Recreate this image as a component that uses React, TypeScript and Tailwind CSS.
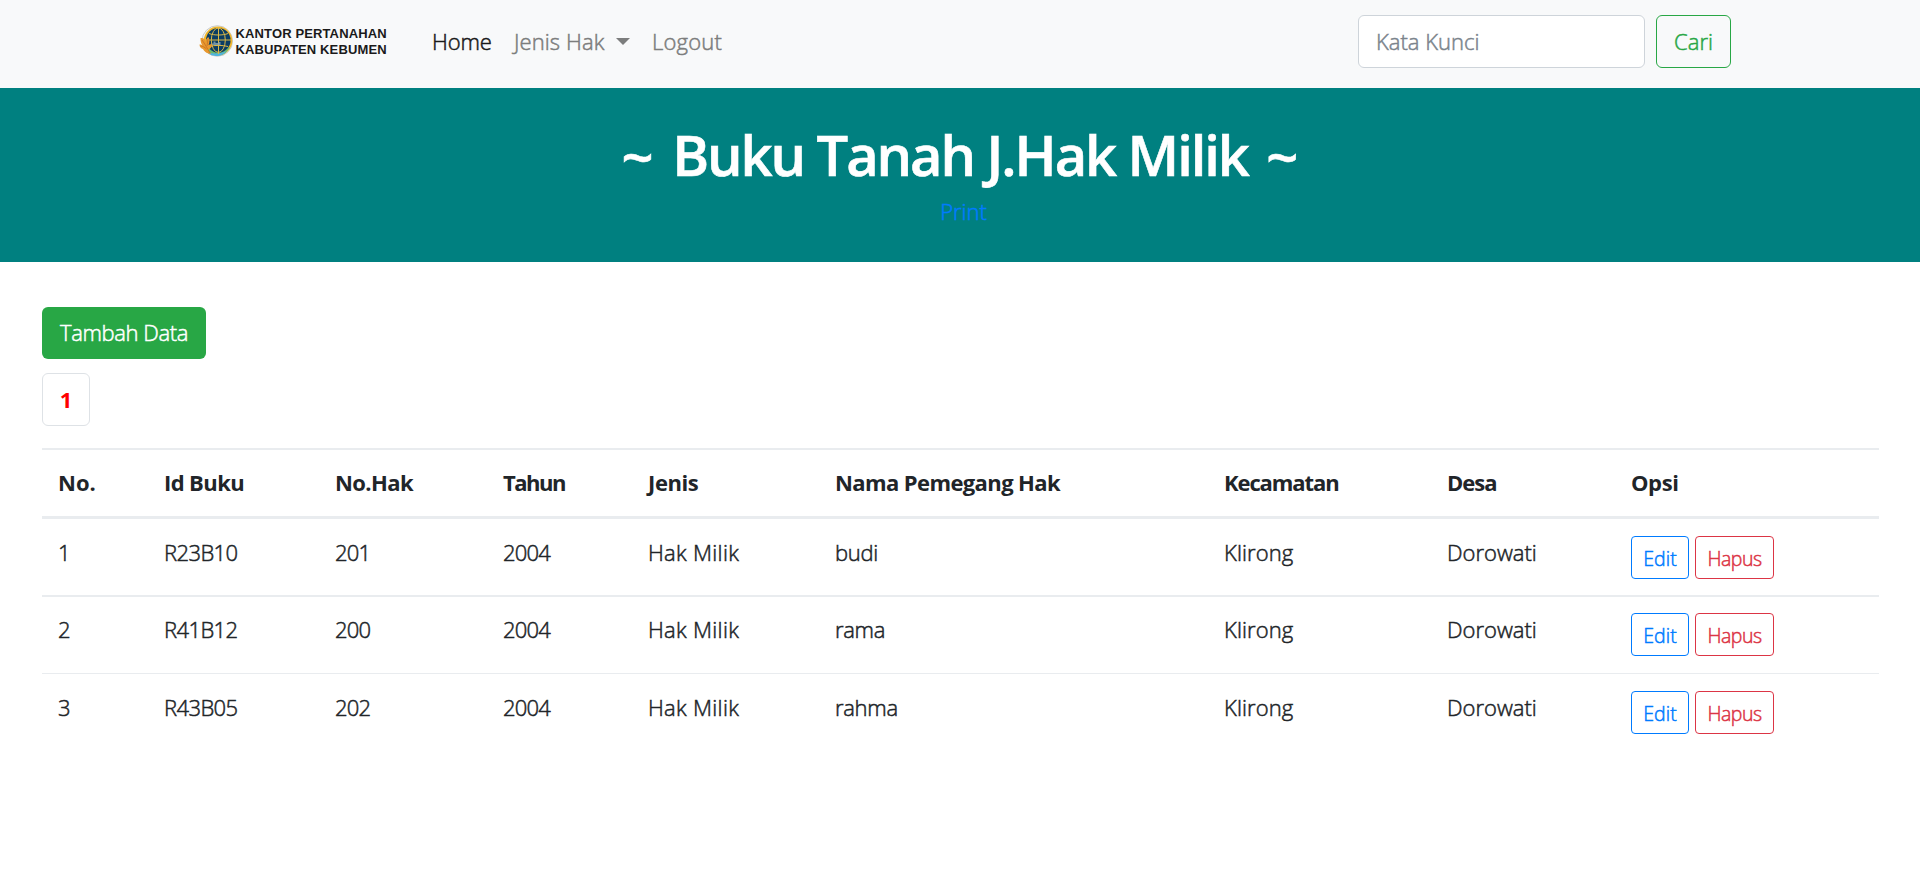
type Cell = { text: string; tracking: string };

const columns: { label: string; width: string; tracking: string }[] = [
  { label: "No.", width: "w-[105px] pl-4", tracking: "tracking-[0px]" },
  { label: "Id Buku", width: "w-[171px] pl-[17px]", tracking: "tracking-[-0.6px]" },
  { label: "No.Hak", width: "w-[168px] pl-[17px]", tracking: "tracking-[-0.6px]" },
  { label: "Tahun", width: "w-[145px] pl-[17px]", tracking: "tracking-[-1.5px]" },
  { label: "Jenis", width: "w-[187px] pl-[17px]", tracking: "tracking-[-0.4px]" },
  { label: "Nama Pemegang Hak", width: "w-[389px] pl-[17px]", tracking: "tracking-[-0.6px]" },
  { label: "Kecamatan", width: "w-[223px] pl-[17px]", tracking: "tracking-[-1.1px]" },
  { label: "Desa", width: "w-[184px] pl-[17px]", tracking: "tracking-[-1px]" },
  { label: "Opsi", width: "w-[265px] pl-[17px]", tracking: "tracking-[-0.4px]" },
];

const rows: Cell[][] = [
  ["1", "R23B10", "201", "budi"],
  ["2", "R41B12", "200", "rama"],
  ["3", "R43B05", "202", "rahma"],
].map(([no, id, hak, name]) => [
  { text: no, tracking: "pl-4" },
  { text: id, tracking: "pl-[17px] tracking-[-0.6px]" },
  { text: hak, tracking: "pl-[17px] tracking-[-0.8px]" },
  { text: "2004", tracking: "pl-[17px] tracking-[-0.8px]" },
  { text: "Hak Milik", tracking: "pl-[17px] tracking-[0.3px]" },
  { text: name, tracking: "pl-[17px] tracking-[-0.3px]" },
  { text: "Klirong", tracking: "pl-[17px] tracking-[0.1px]" },
  { text: "Dorowati", tracking: "pl-[17px] tracking-[0px]" },
]);

const rowStyles = [
  { row: "h-[78px] border-b-2 border-[#e9ecef]", text: "pt-4", actions: "pt-[17px]" },
  { row: "h-[77px] border-b border-[#e9ecef]", text: "pt-[15px]", actions: "pt-4" },
  { row: "h-[77px]", text: "pt-4", actions: "pt-[17px]" },
];

function Emblem() {
  return (
    <svg viewBox="0 0 34 32" className="h-8 w-[34px] shrink-0">
      <circle cx="18.3" cy="16" r="15.3" fill="#f4f5f2" stroke="#c3c6c6" strokeWidth="0.9" />
      <circle cx="19" cy="15.8" r="14.3" fill="#f0b62c" />
      <path d="M6 23c4 3 8 0 13 0s9 0 12-1c-3 6-7 8.5-12 8.5S8 28 6 23Z" fill="#6dba6c" />
      <path d="M8 27c5 2 13 2 20-1-4 4-7 5-10 5S10 30 8 27Z" fill="#4fb3dc" />
      <circle cx="19.3" cy="15.2" r="12.3" fill="#0b3d63" />
      <g fill="none" stroke="#dcb947" strokeWidth="1">
        <ellipse cx="19.3" cy="15.2" rx="7" ry="12.2" />
        <path d="M19.500 3v26M7 15h25M10 8.500c5 2 14 2 19 0M10 21.500c5-1.500 14-1.500 19 0" />
      </g>
      <path d="M12.500 18.500h2v-2h2v1.500h3v-1h2v3h-9Z" fill="#8ba6b5" opacity=".8" />
      <path d="M1.500 13c4 0 5 2 5.500 4 0-3 1-4 2.500-5 1.500 4 1 6 0 8 2-1 2.500-1 3.500-1 0 4-2 5-4 5.500l3 4.500c-5-.5-7-3-8-5-2-.5-3.500-2-3.500-4.500 1.500 0 2.500.5 3 1-1.500-2-2-4-2-7.500Z" fill="#e8982e" />
      <path d="M3 15c3 4 5 8 8 13M1.500 21c2 0 4 1 6 3M9 14c-.5 3-.5 5-1 7" fill="none" stroke="#c66f22" strokeWidth="0.8" />
    </svg>
  );
}

function Navbar() {
  return (
    <nav className="flex h-[88px] items-start bg-[#f8f9fa] pl-[199px] pr-[189px]">
      <a href="#" className="mt-[25px] flex h-8 w-[188px] items-center gap-[2.5px]">
        <Emblem />
        <span className="flex flex-col whitespace-nowrap pt-[2px] font-['Liberation_Sans'] text-[13px] font-bold leading-4 tracking-[0.13px] text-[#1a1a1a] [-webkit-text-stroke:0px]">
          <span>KANTOR PERTANAHAN</span>
          <span>KABUPATEN KEBUMEN</span>
        </span>
      </a>
      <div className="mt-6 flex whitespace-nowrap pl-[45px] leading-[34px]">
        <a href="#" className="w-[82px] tracking-[-0.1px] text-[#1a1a1a]">Home</a>
        <a href="#" className="flex w-[138px] text-[#7c7d7d]">
          <span className="w-[102px] tracking-[0.1px]">Jenis Hak</span>
          <svg viewBox="0 0 14 7" className="mt-[14px] h-[7px] w-[14px]">
            <path d="M0 0h14L7 7Z" fill="currentColor" />
          </svg>
        </a>
        <a href="#" className="tracking-[0.2px] text-[#7c7d7d]">Logout</a>
      </div>
      <form className="ml-auto mt-[15px] flex gap-[11px]">
        <input
          placeholder="Kata Kunci"
          className="h-[53px] w-[287px] rounded-[6px] border border-[#ced4da] bg-white px-[17px] pb-px placeholder:text-[#7b848c]"
        />
        <button type="button" className="h-[53px] w-[75px] rounded-[6px] border border-[#28a745] text-[#28a745]">
          Cari
        </button>
      </form>
    </nav>
  );
}

export default function App() {
  return (
    <div className="min-h-screen bg-white font-['Open_Sans',sans-serif] text-[22px] font-light text-[#212529] [-webkit-text-stroke:0.5px]">
      <Navbar />
      <header className="flex h-[174px] flex-col items-center bg-[#008080] pt-[33px]">
        <h1 className="flex gap-[18.5px] whitespace-nowrap text-[56px] font-semibold leading-[67px] text-white [-webkit-text-stroke:0.6px]">
          <span className="pt-[2px]">~</span>
          <span className="tracking-[-2.05px]">Buku Tanah J.Hak Milik</span>
          <span className="pt-[2px]">~</span>
        </h1>
        <a href="#" className="mt-1 pl-[7px] leading-[34px] text-[#007bff]">Print</a>
      </header>
      <main className="flex flex-col items-start pl-[42px] pr-[41px] pt-[45px]">
        <button type="button" className="h-[52px] w-[164px] whitespace-nowrap rounded-[6px] bg-[#28a745] pb-[2px] tracking-[-0.4px] text-white">
          Tambah Data
        </button>
        <a href="#" className="mt-[14px] flex h-[53px] w-12 items-center justify-center rounded-[6px] border border-[#dee2e6] font-bold text-[#ff0000] [-webkit-text-stroke:0px]">
          1
        </a>
        <table className="mt-[22px] w-full table-fixed border-separate border-spacing-0 text-left leading-[34px]">
          <thead>
            <tr className="h-[71px]">
              {columns.map((c) => (
                <th
                  key={c.label}
                  className={`${c.width} ${c.tracking} whitespace-nowrap border-t-2 border-b-3 border-[#e9ecef] pt-[15px] align-top font-bold [-webkit-text-stroke:0px]`}
                >
                  {c.label}
                </th>
              ))}
            </tr>
          </thead>
          <tbody>
            {rows.map((cells, i) => (
              <tr key={i}>
                {cells.map((cell, j) => (
                  <td key={j} className={`${rowStyles[i].row} ${rowStyles[i].text} ${cell.tracking} whitespace-nowrap align-top`}>
                    {cell.text}
                  </td>
                ))}
                <td className={`${rowStyles[i].row} ${rowStyles[i].actions} pl-[17px] align-top`}>
                  <div className="flex gap-[6px] text-[19.5px]">
                    <button type="button" className="h-[43px] w-[58px] rounded-[4px] border border-[#007bff] pt-[2px] text-[#007bff]">
                      Edit
                    </button>
                    <button type="button" className="h-[43px] w-[79px] rounded-[4px] border border-[#dc3545] pt-[2px] tracking-[-0.5px] text-[#dc3545]">
                      Hapus
                    </button>
                  </div>
                </td>
              </tr>
            ))}
          </tbody>
        </table>
      </main>
    </div>
  );
}
